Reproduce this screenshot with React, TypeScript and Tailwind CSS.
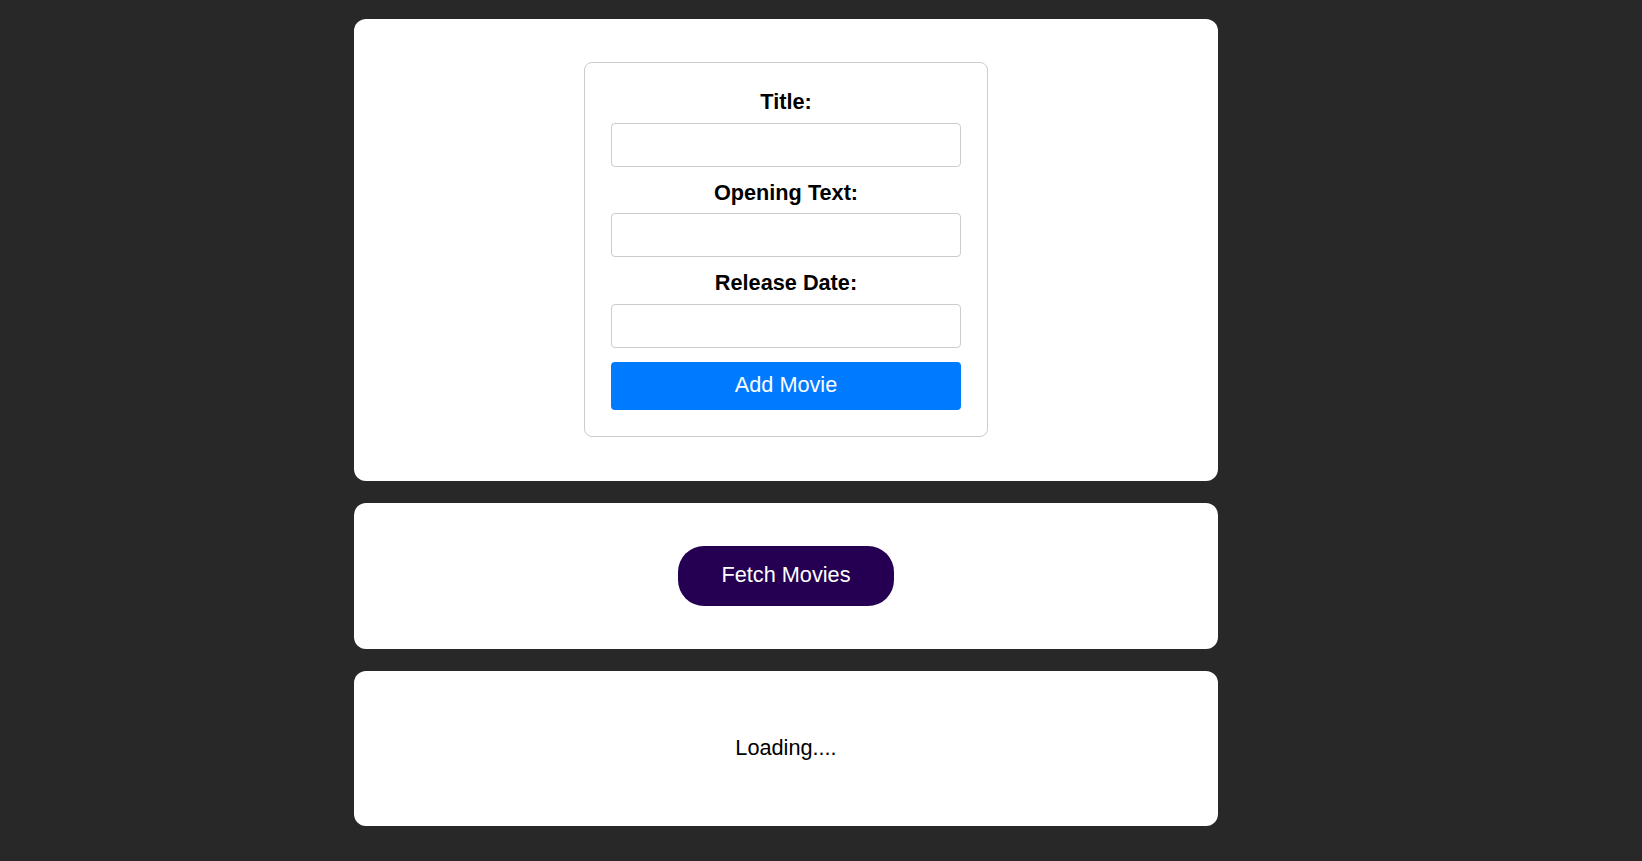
import { useState } from 'react'

// Campos del formulario
const fields = [
  { id: 'title', label: 'Title:' },
  { id: 'opening', label: 'Opening Text:' },
  { id: 'date', label: 'Release Date:' },
]

export default function App() {
  const [values, setValues] = useState<Record<string, string>>({})

  return (
    <div className="min-h-[861px] bg-[#282828] pt-[19px] pb-[35px] font-['Liberation_Sans',Arial,sans-serif] text-black">
      <div className="ml-[354px] flex w-[864px] flex-col gap-[22px]">
        {/* Formulario */}
        <section className="flex justify-center rounded-[12px] bg-white pt-[43px] pb-[44px]">
          <form
            onSubmit={(e) => e.preventDefault()}
            className="flex w-[404px] flex-col rounded-[8px] border border-[#cccccc] px-[26px] pt-[27px] pb-[26px]"
          >
            {fields.map((f, i) => (
              <div key={f.id} className={i === 0 ? 'flex flex-col' : 'mt-[14px] flex flex-col'}>
                <label htmlFor={f.id} className="text-center text-[21.7px] leading-[24px] font-bold">
                  {f.label}
                </label>
                <input
                  id={f.id}
                  value={values[f.id] || ''}
                  onChange={(e) => setValues((prev) => ({ ...prev, [f.id]: e.target.value }))}
                  className="mt-[8.5px] h-[44px] w-full rounded-[4px] border border-[#cccccc] bg-white px-2 text-[18px] outline-none"
                />
              </div>
            ))}
            <button
              type="submit"
              className="mt-[14px] h-[48px] w-full rounded-[4px] bg-[#007bff] text-[21.7px] text-white"
            >
              Add Movie
            </button>
          </form>
        </section>

        {/* Boton */}
        <section className="flex h-[146px] items-center justify-center rounded-[12px] bg-white">
          <button className="h-[60px] w-[216px] rounded-[26px] bg-[#250052] text-[21.7px] text-white">
            Fetch Movies
          </button>
        </section>

        {/* Lista */}
        <section className="flex h-[155px] items-center justify-center rounded-[12px] bg-white">
          <p className="text-[21.7px] leading-[24px]">Loading....</p>
        </section>
      </div>
    </div>
  )
}
